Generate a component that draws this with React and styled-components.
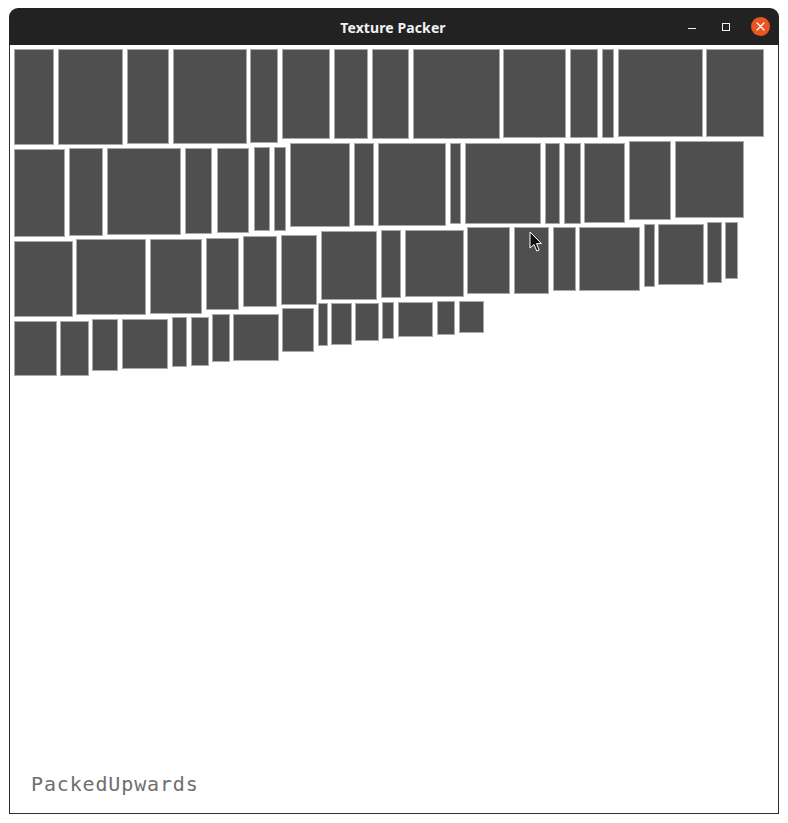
import React from "react";
import styled, { createGlobalStyle } from "styled-components";

const Global = createGlobalStyle`
  html, body { margin: 0; padding: 0; background: #ffffff; }
  body { font-family: "Noto Sans", "DejaVu Sans", sans-serif; }
`;

const Page = styled.div`
  padding: 8px 0 0 9px;
`;

const Window = styled.div`
  width: 770px;
  display: flex;
  flex-direction: column;
`;

const TitleBar = styled.div`
  height: 37px;
  background: #222222;
  border-radius: 9px 9px 0 0;
  display: grid;
  grid-template-columns: 1fr auto 1fr;
  align-items: center;
  padding: 0 2px 0 0;
  box-sizing: border-box;
`;

const Title = styled.div`
  grid-column: 2;
  color: #f2f2f2;
  font-family: "Noto Sans", "DejaVu Sans", sans-serif;
  font-weight: 700;
  font-size: 14px;
  letter-spacing: 0.1px;
  padding-top: 1px;
`;

const Controls = styled.div`
  grid-column: 3;
  justify-self: end;
  display: flex;
  align-items: center;
`;

const CtrlButton = styled.div`
  width: 34px;
  height: 24px;
  display: flex;
  align-items: center;
  justify-content: center;
`;

const Close = styled.div`
  width: 19px;
  height: 19px;
  border-radius: 50%;
  background: #e95420;
  display: flex;
  align-items: center;
  justify-content: center;
`;

const Canvas = styled.div`
  position: relative;
  box-sizing: border-box;
  height: 769px;
  border: 1px solid #2e2e2e;
  border-top: none;
  background: #ffffff;
  display: flex;
  flex-direction: column;
  justify-content: flex-end;
  padding: 0 0 18px 21px;
`;

const Rect = styled.div`
  position: absolute;
  box-sizing: border-box;
  background: #4f4f4f;
  border: 1px solid #a9a9a9;
`;

const Label = styled.div`
  font-family: "DejaVu Sans Mono", "Liberation Mono", monospace;
  font-size: 20px;
  line-height: 22px;
  letter-spacing: 0.85px;
  color: #6e6e6e;
  position: relative;
`;

const Cursor = styled.svg`
  position: absolute;
  pointer-events: none;
`;

// page coordinates: [x1, y1, x2, y2]
const RECTS = [
  // row 1
  [14, 49, 54, 145], [58, 49, 123, 145], [127, 49, 169, 144], [173, 49, 247, 144],
  [250, 49, 278, 143], [282, 49, 330, 139], [334, 49, 368, 139], [372, 49, 409, 139],
  [413, 49, 500, 139], [503, 49, 566, 138], [570, 49, 598, 138], [602, 49, 614, 138],
  [618, 49, 703, 137], [706, 49, 764, 137],
  // row 2
  [14, 149, 65, 237], [69, 148, 103, 236], [107, 148, 181, 235], [185, 148, 212, 234],
  [217, 148, 249, 233], [254, 147, 270, 231], [274, 147, 286, 231], [290, 143, 350, 227],
  [354, 143, 374, 226], [378, 143, 446, 226], [450, 143, 461, 224], [465, 143, 541, 224],
  [545, 143, 560, 224], [564, 143, 581, 224], [584, 143, 625, 223], [629, 141, 671, 220],
  [675, 141, 744, 218],
  // row 3
  [14, 241, 73, 317], [76, 239, 146, 315], [150, 239, 202, 314], [206, 238, 239, 310],
  [243, 236, 277, 307], [281, 235, 317, 305], [321, 231, 377, 300], [381, 230, 401, 298],
  [405, 230, 464, 297], [467, 227, 510, 294], [514, 227, 549, 294], [553, 227, 576, 291],
  [579, 227, 640, 291], [644, 224, 655, 287], [658, 224, 704, 285], [707, 222, 722, 283],
  [725, 222, 738, 279],
  // row 4
  [14, 321, 57, 376], [60, 321, 89, 376], [92, 319, 118, 371], [122, 319, 168, 369],
  [172, 317, 187, 367], [191, 317, 209, 366], [212, 314, 230, 362], [233, 314, 279, 361],
  [282, 308, 314, 352], [318, 303, 328, 346], [331, 303, 352, 345], [355, 303, 379, 341],
  [382, 302, 394, 339], [398, 302, 433, 337], [437, 301, 455, 335], [459, 301, 484, 333],
];

const OX = 10;
const OY = 45;

export default function App() {
  return (
    <>
      <Global />
      <Page>
        <Window>
          <TitleBar>
            <Title>Texture Packer</Title>
            <Controls>
              <CtrlButton>
                <svg width="10" height="10" viewBox="0 0 10 10">
                  <line x1="1" y1="6.5" x2="9" y2="6.5" stroke="#f0f0f0" strokeWidth="1" />
                </svg>
              </CtrlButton>
              <CtrlButton>
                <svg width="10" height="10" viewBox="0 0 10 10">
                  <rect x="1.5" y="1.5" width="7" height="7" fill="none" stroke="#f0f0f0" strokeWidth="1" />
                </svg>
              </CtrlButton>
              <CtrlButton>
                <Close>
                  <svg width="9" height="9" viewBox="0 0 9 9">
                    <path d="M1 1 L8 8 M8 1 L1 8" stroke="#ffffff" strokeWidth="1.3" strokeLinecap="round" />
                  </svg>
                </Close>
              </CtrlButton>
            </Controls>
          </TitleBar>
          <Canvas>
            {RECTS.map(([x1, y1, x2, y2], i) => (
              <Rect
                key={i}
                style={{ left: x1 - OX, top: y1 - OY, width: x2 - x1, height: y2 - y1 }}
              />
            ))}
            <Cursor
              width="14"
              height="22"
              viewBox="0 0 14 22"
              style={{ left: 529 - OX, top: 231 - OY }}
            >
              <path
                d="M1 1 L1 17 L5 13.5 L7.8 20 L10.2 19 L7.5 12.6 L12.5 12.6 Z"
                fill="#111111"
                stroke="#ffffff"
                strokeWidth="1"
                strokeLinejoin="round"
              />
            </Cursor>
            <Label>PackedUpwards</Label>
          </Canvas>
        </Window>
      </Page>
    </>
  );
}
